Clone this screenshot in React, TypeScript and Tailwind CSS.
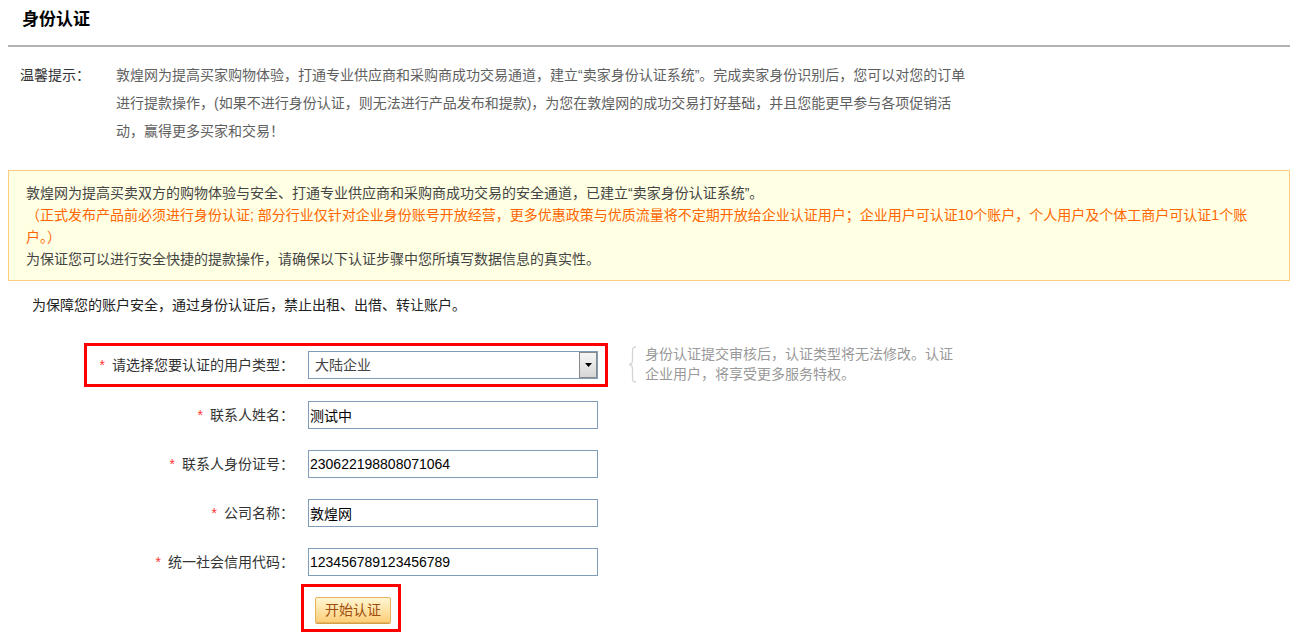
import React from "react";

const font = "font-['Liberation_Sans','Noto_Sans_CJK_SC',sans-serif]";

const Star = () => <span className="text-[#f33] mr-[7px]">*</span>;

const FieldRow = ({
  label,
  value,
  className = "",
}: {
  label: string;
  value: string;
  className?: string;
}) => (
  <div className={`flex items-center pl-[3px] ${className}`}>
    <label className="w-[207px] text-right text-[14px] text-[#333] whitespace-nowrap">
      <Star />
      {label}
    </label>
    <input
      readOnly
      defaultValue={value}
      className="ml-[14px] w-[290px] h-[28px] border border-[#7f9db9] pl-[1px] text-[14px] text-black outline-none bg-white"
    />
  </div>
);

const Brace = () => (
  <svg width="9" height="37" viewBox="0 0 9 37" className="shrink-0 mt-[2px]">
    <path
      d="M8 1 C4 1 4.5 3 4.5 8 L4.5 14 C4.5 17 3.5 18.5 1 18.5 C3.5 18.5 4.5 20 4.5 23 L4.5 29 C4.5 34 4 36 8 36"
      fill="none"
      stroke="#d4d4d4"
      strokeWidth="1.3"
    />
  </svg>
);

export default function App() {
  return (
    <div className={`w-full min-h-[638px] bg-white ${font}`}>
      <div className="ml-[8px] w-[1282px]">
        <div className="h-[45px] pt-[9px] pl-[14px]">
          <h2 className="text-[17px] leading-[22px] font-bold text-black">身份认证</h2>
        </div>
        <div className="h-[2px] bg-[#b3b3b3]" />

        <div className="flex pt-[14px] pl-[12px] text-[14px] leading-[28px] whitespace-nowrap">
          <span className="w-[96px] text-[#333]">温馨提示：</span>
          <p className="text-[#5f5f5f]">
            敦煌网为提高买家购物体验，打通专业供应商和采购商成功交易通道，建立“卖家身份认证系统”。完成卖家身份识别后，您可以对您的订单
            <br />
            进行提款操作，(如果不进行身份认证，则无法进行产品发布和提款)，为您在敦煌网的成功交易打好基础，并且您能更早参与各项促销活
            <br />
            动，赢得更多买家和交易！
          </p>
        </div>

        <div className="mt-[25px] border border-[#ffcc80] bg-[#ffffe3] pt-[11px] pb-[10px] pl-[17px] text-[14px] leading-[22px] whitespace-nowrap">
          <p className="text-[#444]">
            敦煌网为提高买卖双方的购物体验与安全、打通专业供应商和采购商成功交易的安全通道，已建立“卖家身份认证系统”。
          </p>
          <p className="text-[#ff6600]">
            （正式发布产品前必须进行身份认证; 部分行业仅针对企业身份账号开放经营，更多优惠政策与优质流量将不定期开放给企业认证用户；企业用户可认证10个账户，个人用户及个体工商户可认证1个账
            <br />
            户。）
          </p>
          <p className="text-[#444]">
            为保证您可以进行安全快捷的提款操作，请确保以下认证步骤中您所填写数据信息的真实性。
          </p>
        </div>

        <p className="mt-[14px] pl-[24px] text-[14px] leading-[20px] text-[#222]">
          为保障您的账户安全，通过身份认证后，禁止出租、出借、转让账户。
        </p>

        <div className="mt-[28px] pl-[76px]">
          <div className="flex items-start">
            <div className="flex items-center w-[524px] h-[44px] border-[3px] border-[#f00]">
              <label className="w-[207px] text-right text-[14px] text-[#333] whitespace-nowrap">
                <Star />
                请选择您要认证的用户类型：
              </label>
              <div className="ml-[14px] flex w-[290px] h-[28px] border border-[#7f9db9] bg-white">
                <span className="flex-1 pl-[6px] text-[14px] leading-[26px] text-[#444]">
                  大陆企业
                </span>
                <span className="flex items-center justify-center w-[18px] h-[26px] border border-[#8a8a8a] bg-linear-to-b from-[#f6f6f6] to-[#d6d6d6]">
                  <svg width="7" height="4" viewBox="0 0 7 4">
                    <path d="M0 0 H7 L3.5 4 Z" fill="#000" />
                  </svg>
                </span>
              </div>
            </div>
            <div className="flex ml-[20px] mt-[1px]">
              <Brace />
              <p className="ml-[8px] text-[14px] leading-[20px] text-[#999] whitespace-nowrap">
                身份认证提交审核后，认证类型将无法修改。认证
                <br />
                企业用户，将享受更多服务特权。
              </p>
            </div>
          </div>

          <FieldRow label="联系人姓名：" value="测试中" className="mt-[14px]" />
          <FieldRow label="联系人身份证号：" value="230622198808071064" className="mt-[21px]" />
          <FieldRow label="公司名称：" value="敦煌网" className="mt-[21px]" />
          <FieldRow label="统一社会信用代码：" value="123456789123456789" className="mt-[21px]" />

          <div className="ml-[217px] mt-[8px] w-[100px] h-[48px] border-[3px] border-[#f00] pl-[11px] pt-[10px]">
            <button
              type="button"
              className="w-[76px] h-[26px] border border-[#e5b35e] rounded-[2px] bg-linear-to-b from-[#fff6d2] to-[#fdcf78] text-[14px] leading-[24px] text-[#a04e0c] shadow-[0_1px_0_#d8a046]"
            >
              开始认证
            </button>
          </div>
        </div>
      </div>
    </div>
  );
}
